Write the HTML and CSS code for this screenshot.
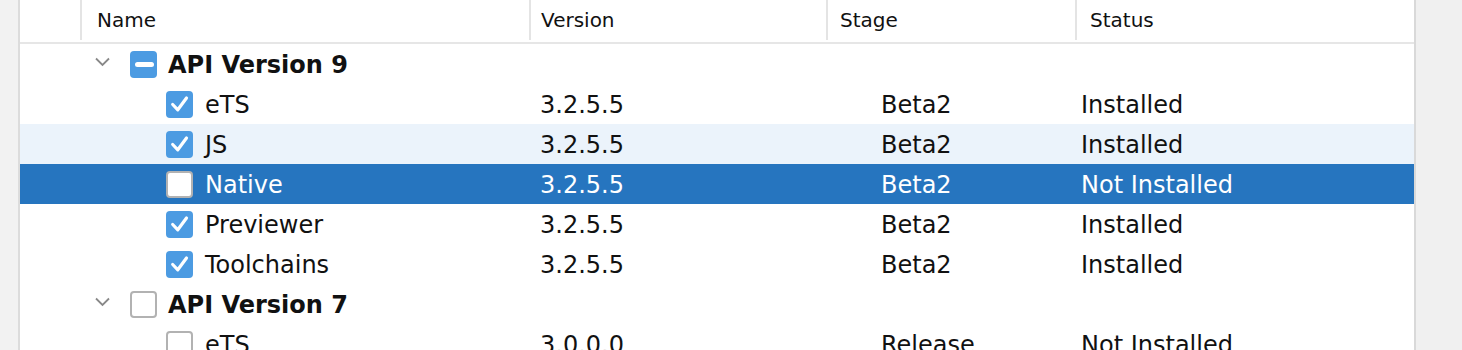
FILE: index.html
```html
<!DOCTYPE html>
<html>
<head>
<meta charset="utf-8">
<link rel="stylesheet" href="styles.css">
</head>
<body>
<div class="frame">
  <div class="gutter left"></div>
  <div class="table">
    <div class="header">
      <div class="hcell blank"></div>
      <div class="hcell">Name</div>
      <div class="hcell">Version</div>
      <div class="hcell">Stage</div>
      <div class="hcell">Status</div>
    </div>

    <div class="row">
      <div class="name parent">
        <svg class="chev" width="20" height="20" viewBox="0 0 20 20"><path d="M4 4.5 L10.5 11 L17 4.5" fill="none" stroke="#888" stroke-width="1.8"/></svg>
        <span class="cb on"><svg width="27" height="27" viewBox="0 0 27 27"><rect x="5" y="11" width="19" height="5" rx="2.5" fill="#fff"/></svg></span>
        <span class="label bold">API Version 9</span>
      </div>
      <div class="cell"></div><div class="cell"></div><div class="cell"></div>
    </div>

    <div class="row">
      <div class="name child">
        <span class="cb on"><svg width="27" height="27" viewBox="0 0 27 27"><path d="M6.7 13.5 L11.8 18.8 L20.5 7" fill="none" stroke="#fff" stroke-width="3.2" stroke-linecap="round" stroke-linejoin="round"/></svg></span>
        <span class="label">eTS</span>
      </div>
      <div class="cell">3.2.5.5</div><div class="cell">Beta2</div><div class="cell">Installed</div>
    </div>

    <div class="row hover">
      <div class="name child">
        <span class="cb on"><svg width="27" height="27" viewBox="0 0 27 27"><path d="M6.7 13.5 L11.8 18.8 L20.5 7" fill="none" stroke="#fff" stroke-width="3.2" stroke-linecap="round" stroke-linejoin="round"/></svg></span>
        <span class="label">JS</span>
      </div>
      <div class="cell">3.2.5.5</div><div class="cell">Beta2</div><div class="cell">Installed</div>
    </div>

    <div class="row selected">
      <div class="name child">
        <span class="cb off"></span>
        <span class="label">Native</span>
      </div>
      <div class="cell">3.2.5.5</div><div class="cell">Beta2</div><div class="cell">Not Installed</div>
    </div>

    <div class="row">
      <div class="name child">
        <span class="cb on"><svg width="27" height="27" viewBox="0 0 27 27"><path d="M6.7 13.5 L11.8 18.8 L20.5 7" fill="none" stroke="#fff" stroke-width="3.2" stroke-linecap="round" stroke-linejoin="round"/></svg></span>
        <span class="label">Previewer</span>
      </div>
      <div class="cell">3.2.5.5</div><div class="cell">Beta2</div><div class="cell">Installed</div>
    </div>

    <div class="row">
      <div class="name child">
        <span class="cb on"><svg width="27" height="27" viewBox="0 0 27 27"><path d="M6.7 13.5 L11.8 18.8 L20.5 7" fill="none" stroke="#fff" stroke-width="3.2" stroke-linecap="round" stroke-linejoin="round"/></svg></span>
        <span class="label">Toolchains</span>
      </div>
      <div class="cell">3.2.5.5</div><div class="cell">Beta2</div><div class="cell">Installed</div>
    </div>

    <div class="row">
      <div class="name parent">
        <svg class="chev" width="20" height="20" viewBox="0 0 20 20"><path d="M4 4.5 L10.5 11 L17 4.5" fill="none" stroke="#888" stroke-width="1.8"/></svg>
        <span class="cb off"></span>
        <span class="label bold">API Version 7</span>
      </div>
      <div class="cell"></div><div class="cell"></div><div class="cell"></div>
    </div>

    <div class="row">
      <div class="name child">
        <span class="cb off"></span>
        <span class="label">eTS</span>
      </div>
      <div class="cell">3.0.0.0</div><div class="cell">Release</div><div class="cell">Not Installed</div>
    </div>
  </div>
  <div class="gutter right"></div>
</div>
</body>
</html>
```

FILE: styles.css
```css
html, body {
  margin: 0;
  padding: 0;
  height: 350px;
  overflow: hidden;
  background: #f2f2f2;
}
.frame {
  display: flex;
  height: 350px;
  overflow: hidden;
  font-family: "DejaVu Sans", "Liberation Sans", sans-serif;
  color: #111;
}
.gutter {
  background: #f2f2f2;
}
.gutter.left {
  width: 18px;
  border-right: 2px solid #dcdcdc;
}
.gutter.right {
  flex: 1;
  border-left: 2px solid #d9d9d9;
  background: #f0f0f0;
}
.table {
  width: 1394px;
  background: #fff;
  display: flex;
  flex-direction: column;
  overflow: hidden;
}
.header {
  display: grid;
  grid-template-columns: 60px 449px 297px 249px 1fr;
  height: 42px;
  border-bottom: 2px solid #e6e6e6;
  flex: none;
}
.hcell {
  height: 40px;
  line-height: 40px;
  font-size: 20px;
  border-left: 2px solid #e4e4e4;
  padding-left: 15px;
  white-space: nowrap;
}
.hcell.blank {
  border-left: none;
}
.hcell:nth-child(3) { padding-left: 10px; }
.hcell:nth-child(4) { padding-left: 12px; }
.hcell:nth-child(5) { padding-left: 13px; }
.row {
  display: grid;
  grid-template-columns: 520px 341px 200px 1fr;
  height: 40px;
  flex: none;
  font-size: 24px;
  line-height: 38px;
}
.row.hover {
  background: #ebf3fb;
}
.row.selected {
  background: #2675bf;
  color: #fff;
}
.cell {
  white-space: nowrap;
  padding-top: 2px;
  box-sizing: border-box;
}
.name {
  display: flex;
  align-items: center;
  white-space: nowrap;
}
.name.parent {
  padding-left: 72px;
}
.name.child {
  padding-left: 146px;
}
.chev {
  display: block;
  flex: none;
  margin-top: -1px;
}
.cb {
  display: block;
  flex: none;
  width: 27px;
  height: 27px;
  border-radius: 4px;
  box-sizing: border-box;
}
.cb svg {
  display: block;
}
.cb.on {
  background: #4c9be2;
}
.cb.off {
  background: #fff;
  border: 2px solid #b2b2b2;
}
.parent .cb {
  margin-left: 18px;
}
.label {
  margin-left: 12px;
  padding-top: 2px;
}
.label.bold {
  font-weight: bold;
  margin-left: 11px;
}
```
